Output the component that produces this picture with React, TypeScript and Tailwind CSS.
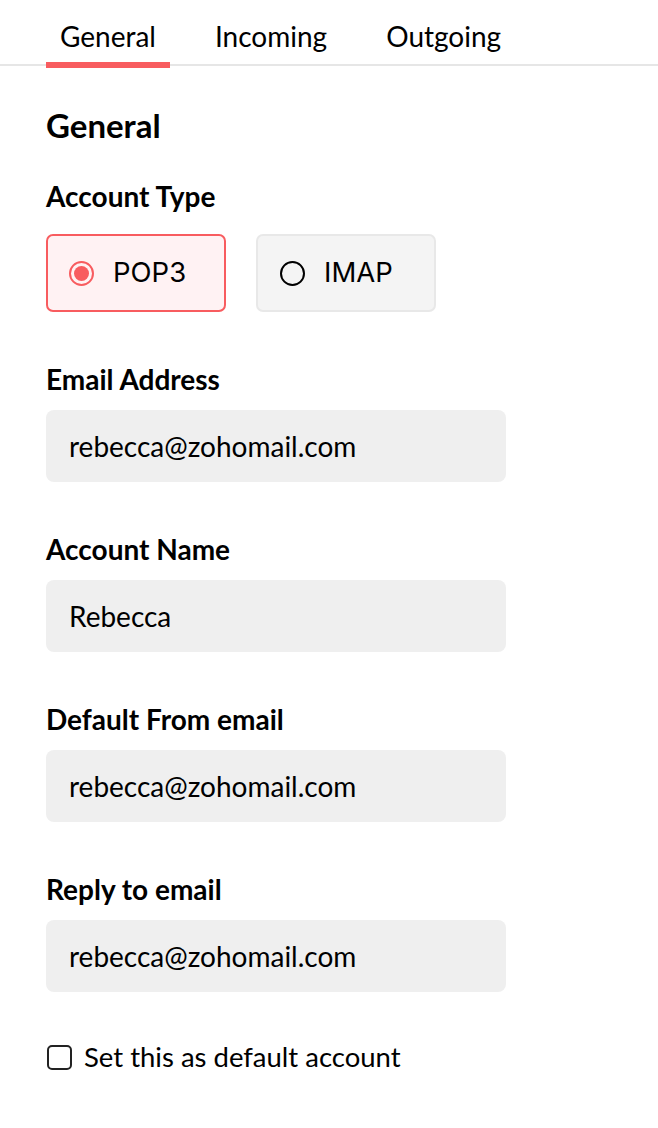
import React from "react";

const fields = [
  { label: "Email Address", value: "rebecca@zohomail.com" },
  { label: "Account Name", value: "Rebecca" },
  { label: "Default From email", value: "rebecca@zohomail.com" },
  { label: "Reply to email", value: "rebecca@zohomail.com" },
];

const tabs = ["General", "Incoming", "Outgoing"];

export default function App() {
  return (
    <div
      className="min-h-[1128px] w-[658px] bg-white text-black"
      style={{ fontFamily: "Lato, 'Noto Sans', sans-serif" }}
    >
      {/* Tabs */}
      <div className="relative flex gap-[31px] pl-[46px] pt-[18px]">
        <div className="absolute bottom-[2px] left-0 right-0 h-[2px] bg-[#e6e6e6]" />
        {tabs.map((t, i) => (
          <div key={t} className="relative flex flex-col items-center">
            <div className="px-[14px] text-[28px] leading-[36px]">{t}</div>
            <div
              className={`relative mt-[8px] h-[6px] w-full ${
                i === 0 ? "bg-[#f85c5f]" : "bg-transparent"
              }`}
            />
          </div>
        ))}
      </div>

      <div className="pl-[46px]">
        <h2 className="mt-[37px] text-[33px] font-bold leading-[40px]">General</h2>

        <div className="mt-[34px] text-[28px] font-bold leading-[34px]">Account Type</div>

        {/* Radio options */}
        <div className="mt-[21px] flex gap-[30px]">
          <div className="flex h-[78px] w-[180px] items-center rounded-[7px] border-2 border-[#f85c5f] bg-[#fff2f3] pl-[21px]">
            <span className="flex h-[25px] w-[25px] items-center justify-center rounded-full border-2 border-[#f85c5f]">
              <span className="h-[15px] w-[15px] rounded-full bg-[#f85c5f]" />
            </span>
            <span
              className="ml-[19px] text-[27.5px]"
              style={{ fontFamily: "Inter, sans-serif" }}
            >
              POP3
            </span>
          </div>
          <div className="flex h-[78px] w-[180px] items-center rounded-[7px] border-2 border-[#e8e8e8] bg-[#f4f4f4] pl-[22px]">
            <span className="h-[25px] w-[25px] rounded-full border-2 border-black" />
            <span
              className="ml-[19px] text-[27.5px]"
              style={{ fontFamily: "Inter, sans-serif" }}
            >
              IMAP
            </span>
          </div>
        </div>

        {/* Fields */}
        <div className="mt-[50px] flex flex-col gap-[50px]">
          {fields.map((f) => (
            <div key={f.label}>
              <div className="text-[28px] font-bold leading-[34px]">{f.label}</div>
              <div className="mt-[14px] flex h-[72px] w-[460px] items-center rounded-[8px] bg-[#efefef] pl-[23px] text-[28px]">
                {f.value}
              </div>
            </div>
          ))}
        </div>

        {/* Checkbox */}
        <label className="mt-[48px] flex items-center">
          <span className="ml-[1px] h-[25px] w-[25px] rounded-[5px] border-2 border-[#222]" />
          <span className="ml-[12px] text-[27.5px] leading-[34px]">Set this as default account</span>
        </label>
      </div>
    </div>
  );
}
